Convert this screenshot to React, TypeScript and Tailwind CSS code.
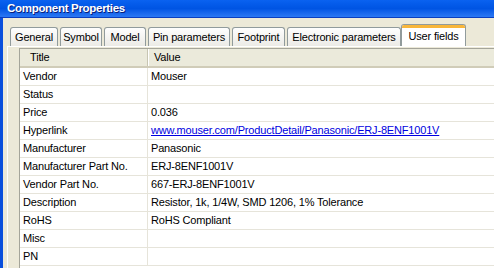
import { type ReactNode } from 'react'

// XP-style "Component Properties" dialog, User fields tab selected.
const tabs = [
  { label: 'General', w: 'w-[48px]' },
  { label: 'Symbol', w: 'w-[42px]' },
  { label: 'Model', w: 'w-[42px]' },
  { label: 'Pin parameters', w: 'w-[82px]' },
  { label: 'Footprint', w: 'w-[53px]' },
  { label: 'Electronic parameters', w: 'w-[114px]' },
]

const rows: { title: string; value?: ReactNode }[] = [
  { title: 'Vendor', value: 'Mouser' },
  { title: 'Status' },
  { title: 'Price', value: '0.036' },
  {
    title: 'Hyperlink',
    value: (
      <span className="text-[#0000e0] underline">www.mouser.com/ProductDetail/Panasonic/ERJ-8ENF1001V</span>
    ),
  },
  { title: 'Manufacturer', value: 'Panasonic' },
  { title: 'Manufacturer Part No.', value: 'ERJ-8ENF1001V' },
  { title: 'Vendor Part No.', value: '667-ERJ-8ENF1001V' },
  { title: 'Description', value: 'Resistor, 1k, 1/4W, SMD 1206, 1% Tolerance' },
  { title: 'RoHS', value: 'RoHS Compliant' },
  { title: 'Misc' },
  { title: 'PN' },
]

const Tab = ({ label, w }: { label: string; w: string }) => (
  <div
    className={`${w} flex h-[19px] items-center justify-center rounded-t-[3px] border border-b-0 border-[#919b9c] bg-gradient-to-b from-[#fefefe] to-[#ecebe6] text-black`}
  >
    {label}
  </div>
)

export default function App() {
  return (
    <div
      className="flex h-[268px] w-[494px] flex-col overflow-hidden bg-[#ece9d8] text-[11px] tracking-[-0.17px] text-black"
      style={{ fontFamily: '"Liberation Sans", Arial, sans-serif' }}
    >
      {/* title bar */}
      <div className="flex h-[18px] shrink-0 items-center border-b border-[#0a3fc0] bg-gradient-to-b from-[#0a62f0] via-[#0054e3] to-[#2a78f4] pl-[7px]">
        <span className="text-[11.5px] font-bold tracking-[-0.3px] text-white [text-shadow:1px_1px_0_#0a1e78]">
          Component Properties
        </span>
      </div>

      <div className="flex min-h-0 flex-1 border-l-[3px] border-[#0a4fdc]">
        <div className="flex min-w-0 flex-1 flex-col pl-[4px]">
          {/* tab strip */}
          <div className="flex h-[28px] shrink-0 items-end gap-[2px] pl-[3px]">
            {tabs.map((t) => (
              <Tab key={t.label} {...t} />
            ))}
            <div className="-ml-[2px] flex h-[22px] w-[65px] flex-col rounded-t-[3px] border border-b-0 border-[#919b9c] bg-white">
              <div className="h-[3px] rounded-t-[2px] bg-[#f8b63a]" />
              <div className="flex flex-1 items-center justify-center pb-[2px]">User fields</div>
            </div>
          </div>

          {/* tab page */}
          <div className="flex min-h-0 flex-1 border-l border-t border-white pl-[11px] pt-[1px]">
            <div className="min-w-0 flex-1 border-l border-t border-[#a5a59a] bg-white">
              <div className="flex h-[19px] border-b-[2px] border-[#d0ccb8] bg-[#ebeadb]">
                <div className="flex w-[128px] items-center border-r border-[#c7c5b2] pl-[10px]">Title</div>
                <div className="flex flex-1 items-center border-l border-white pl-[5px]">Value</div>
              </div>
              {rows.map((r) => (
                <div key={r.title} className="flex h-[18px] border-b border-[#e6e4da]">
                  <div className="flex w-[128px] items-center border-r border-[#e6e4da] pl-[3px]">{r.title}</div>
                  <div className="flex flex-1 items-center whitespace-nowrap pl-[3px]">{r.value}</div>
                </div>
              ))}
            </div>
          </div>
        </div>
      </div>
    </div>
  )
}
